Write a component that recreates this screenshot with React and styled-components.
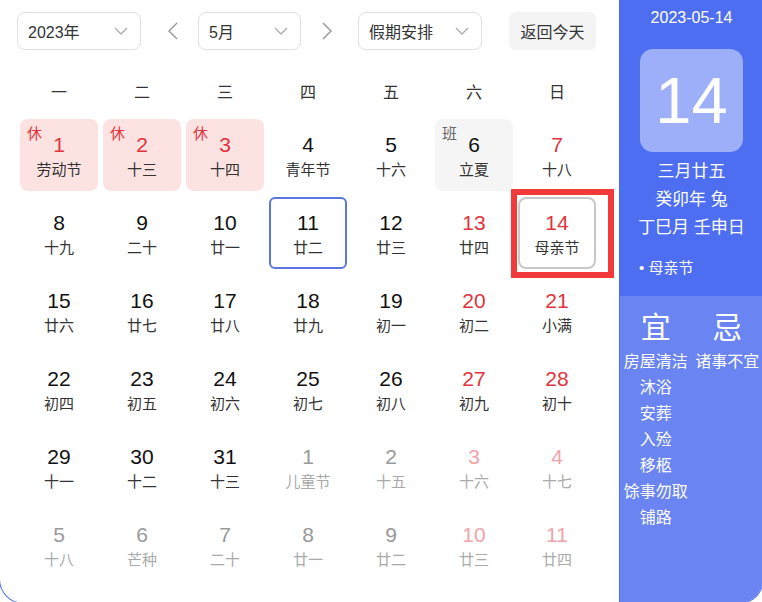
import React from "react";
import styled, { createGlobalStyle, css } from "styled-components";

const Global = createGlobalStyle`
  html, body { margin: 0; padding: 0; background: #fff; overflow: hidden; }
  body { font-family: "Liberation Sans", "Noto Sans CJK SC", sans-serif; }
  * { box-sizing: border-box; }
`;

const RED = "#e3343d";
const BLUE = "#4e6ef2";

const Widget = styled.div`
  margin-left: -1px;
  width: 765px;
  height: 604px;
  border: 1px solid ${BLUE};
  border-top: 0;
  border-radius: 0 0 25px 25px;
  overflow: hidden;
  display: flex;
  background: #fff;
`;

const Main = styled.div`
  width: 619px;
  flex: none;
  padding: 12px 0 0 17px;
`;

const Toolbar = styled.div`
  display: flex;
  align-items: center;
  height: 38px;
`;

const Select = styled.div`
  width: ${(p) => p.$w}px;
  height: 38px;
  border: 1px solid #dcdfe6;
  border-radius: 8px;
  display: flex;
  align-items: center;
  justify-content: space-between;
  padding: 0 12px 0 10px;
  font-size: 16px;
  color: #333;
  margin-right: ${(p) => p.$mr || 0}px;
`;

const Arrow = styled.div`
  width: 16px;
  height: 38px;
  display: flex;
  align-items: center;
  justify-content: center;
  margin-right: ${(p) => p.$mr}px;
`;

const TodayBtn = styled.div`
  width: 87px;
  height: 38px;
  border-radius: 7px;
  background: #f4f4f5;
  display: flex;
  align-items: center;
  justify-content: center;
  font-size: 16px;
  color: #333;
  margin-left: 27px;
`;

const Grid = styled.div`
  margin-left: 3px;
  display: grid;
  grid-template-columns: repeat(7, 78px);
  column-gap: 5px;
`;

const Header = styled(Grid)`
  margin-top: 30px;
  height: 26px;
  align-items: center;
`;

const WeekDay = styled.div`
  text-align: center;
  font-size: 16px;
  color: #333;
  line-height: 26px;
`;

const Days = styled(Grid)`
  margin-top: 13px;
  grid-auto-rows: 72px;
  row-gap: 6px;
`;

const Cell = styled.div`
  position: relative;
  border-radius: 8px;
  display: flex;
  flex-direction: column;
  align-items: center;
  padding-top: 14px;
  ${(p) => p.$kind === "rest" && css`background: #fde2e2;`}
  ${(p) => p.$kind === "work" && css`background: #f5f5f5;`}
  ${(p) =>
    p.$today &&
    css`
      border: 2px solid #5a76e0;
      border-radius: 6px;
      padding-top: 12px;
    `}
  ${(p) =>
    p.$selected &&
    css`
      border: 2px solid #c8c8c8;
      padding-top: 12px;
    `}
`;

const Num = styled.div`
  font-size: 21px;
  line-height: 24px;
  color: ${(p) =>
    p.$tone === "red" ? RED : p.$tone === "muted" ? "#999" : p.$tone === "mutedRed" ? "#f2a3a8" : "#111"};
`;

const Lunar = styled.div`
  margin-top: 3px;
  font-size: 15px;
  line-height: 20px;
  color: ${(p) => (p.$muted ? "#aaa" : "#333")};
`;

const Tag = styled.span`
  position: absolute;
  top: 7px;
  left: 7px;
  font-size: 15px;
  line-height: 16px;
  color: ${(p) => (p.$rest ? RED : "#666")};
`;

const Highlight = styled.div`
  position: absolute;
  left: -9px;
  top: -10px;
  right: -20px;
  bottom: -11px;
  border: 6px solid #f23a3a;
  pointer-events: none;
`;

const Panel = styled.div`
  flex: 1;
  border-left: 1px solid ${BLUE};
  display: flex;
  flex-direction: column;
  color: #fff;
  background: #6a85f2;
`;

const PanelTop = styled.div`
  height: 296px;
  background: ${BLUE};
  display: flex;
  flex-direction: column;
  align-items: center;
  padding-top: 8px;
`;

const DateText = styled.div`
  font-size: 16px;
  line-height: 20px;
`;

const BigDay = styled.div`
  margin-top: 21px;
  width: 103px;
  height: 103px;
  border-radius: 13px;
  background: rgba(255, 255, 255, 0.45);
  display: flex;
  align-items: center;
  justify-content: center;
  font-size: 65px;
  line-height: 1;
`;

const LunarInfo = styled.div`
  margin-top: 6px;
  font-size: 17px;
  line-height: 28px;
  text-align: center;
`;

const Festival = styled.div`
  align-self: stretch;
  margin-top: 16px;
  padding-left: 19px;
  font-size: 15px;
  line-height: 20px;
`;

const Almanac = styled.div`
  display: grid;
  grid-template-columns: 1fr 1fr;
  padding-top: 14px;
`;

const AlmanacCol = styled.div`
  display: flex;
  flex-direction: column;
  align-items: center;
`;

const AlmanacHead = styled.div`
  font-size: 30px;
  line-height: 36px;
  margin-bottom: 3px;
`;

const AlmanacItem = styled.div`
  font-size: 16px;
  line-height: 26px;
  white-space: nowrap;
`;

const Chevron = () => (
  <svg width="14" height="8" viewBox="0 0 14 8">
    <polyline points="1,1 7,7 13,1" fill="none" stroke="#a8abb2" strokeWidth="1.3" />
  </svg>
);

const ArrowIcon = ({ dir }) => (
  <svg width="10" height="18" viewBox="0 0 10 18">
    <polyline
      points={dir === "left" ? "9,1 1,9 9,17" : "1,1 9,9 1,17"}
      fill="none"
      stroke="#999"
      strokeWidth="1.5"
    />
  </svg>
);

const days = [
  { n: 1, l: "劳动节", red: true, kind: "rest" },
  { n: 2, l: "十三", red: true, kind: "rest" },
  { n: 3, l: "十四", red: true, kind: "rest" },
  { n: 4, l: "青年节" },
  { n: 5, l: "十六" },
  { n: 6, l: "立夏", kind: "work" },
  { n: 7, l: "十八", red: true },
  { n: 8, l: "十九" },
  { n: 9, l: "二十" },
  { n: 10, l: "廿一" },
  { n: 11, l: "廿二", today: true },
  { n: 12, l: "廿三" },
  { n: 13, l: "廿四", red: true },
  { n: 14, l: "母亲节", red: true, selected: true },
  { n: 15, l: "廿六" },
  { n: 16, l: "廿七" },
  { n: 17, l: "廿八" },
  { n: 18, l: "廿九" },
  { n: 19, l: "初一" },
  { n: 20, l: "初二", red: true },
  { n: 21, l: "小满", red: true },
  { n: 22, l: "初四" },
  { n: 23, l: "初五" },
  { n: 24, l: "初六" },
  { n: 25, l: "初七" },
  { n: 26, l: "初八" },
  { n: 27, l: "初九", red: true },
  { n: 28, l: "初十", red: true },
  { n: 29, l: "十一" },
  { n: 30, l: "十二" },
  { n: 31, l: "十三" },
  { n: 1, l: "儿童节", other: true },
  { n: 2, l: "十五", other: true },
  { n: 3, l: "十六", other: true, red: true },
  { n: 4, l: "十七", other: true, red: true },
  { n: 5, l: "十八", other: true },
  { n: 6, l: "芒种", other: true },
  { n: 7, l: "二十", other: true },
  { n: 8, l: "廿一", other: true },
  { n: 9, l: "廿二", other: true },
  { n: 10, l: "廿三", other: true, red: true },
  { n: 11, l: "廿四", other: true, red: true },
];

const weekDays = ["一", "二", "三", "四", "五", "六", "日"];
const yi = ["房屋清洁", "沐浴", "安葬", "入殓", "移柩", "馀事勿取", "铺路"];
const ji = ["诸事不宜"];

function tone(d) {
  if (d.other) return d.red ? "mutedRed" : "muted";
  return d.red ? "red" : "normal";
}

export default function App() {
  return (
    <>
      <Global />
      <Widget>
        <Main>
          <Toolbar>
            <Select $w={124} $mr={24}>
              <span>2023年</span>
              <Chevron />
            </Select>
            <Arrow $mr={17}>
              <ArrowIcon dir="left" />
            </Arrow>
            <Select $w={103} $mr={18}>
              <span>5月</span>
              <Chevron />
            </Select>
            <Arrow $mr={23}>
              <ArrowIcon dir="right" />
            </Arrow>
            <Select $w={124}>
              <span>假期安排</span>
              <Chevron />
            </Select>
            <TodayBtn>返回今天</TodayBtn>
          </Toolbar>
          <Header>
            {weekDays.map((w) => (
              <WeekDay key={w}>{w}</WeekDay>
            ))}
          </Header>
          <Days>
            {days.map((d, i) => (
              <Cell key={i} $kind={d.kind} $today={d.today} $selected={d.selected}>
                {d.kind === "rest" && <Tag $rest>休</Tag>}
                {d.kind === "work" && <Tag>班</Tag>}
                <Num $tone={tone(d)}>{d.n}</Num>
                <Lunar $muted={d.other}>{d.l}</Lunar>
                {d.selected && <Highlight />}
              </Cell>
            ))}
          </Days>
        </Main>
        <Panel>
          <PanelTop>
            <DateText>2023-05-14</DateText>
            <BigDay>14</BigDay>
            <LunarInfo>
              <div>三月廿五</div>
              <div>癸卯年 兔</div>
              <div>丁巳月 壬申日</div>
            </LunarInfo>
            <Festival>• 母亲节</Festival>
          </PanelTop>
          <Almanac>
            <AlmanacCol>
              <AlmanacHead>宜</AlmanacHead>
              {yi.map((t) => (
                <AlmanacItem key={t}>{t}</AlmanacItem>
              ))}
            </AlmanacCol>
            <AlmanacCol>
              <AlmanacHead>忌</AlmanacHead>
              {ji.map((t) => (
                <AlmanacItem key={t}>{t}</AlmanacItem>
              ))}
            </AlmanacCol>
          </Almanac>
        </Panel>
      </Widget>
    </>
  );
}
